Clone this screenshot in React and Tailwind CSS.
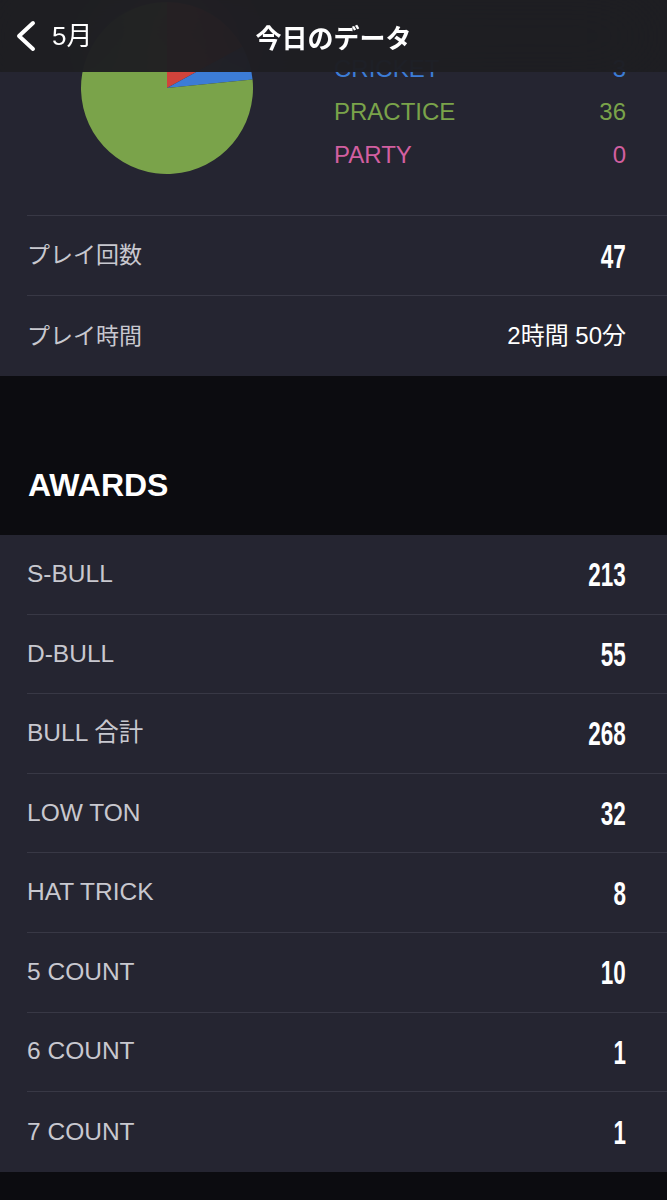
import React from "react";

const font = { fontFamily: '"Liberation Sans", "Noto Sans CJK JP", sans-serif' };

const legend = [
  { label: "01 GAMES", value: 8, color: "#d0433b", hidden: true },
  { label: "CRICKET", value: 3, color: "#3c7cd6" },
  { label: "PRACTICE", value: 36, color: "#7aa34a" },
  { label: "PARTY", value: 0, color: "#d25fa0" },
];

const awards = [
  ["S-BULL", "213"],
  ["D-BULL", "55"],
  ["BULL 合計", "268"],
  ["LOW TON", "32"],
  ["HAT TRICK", "8"],
  ["5 COUNT", "10"],
  ["6 COUNT", "1"],
  ["7 COUNT", "1"],
];

const Pie = () => {
  const total = legend.reduce((s, d) => s + d.value, 0);
  let start = 0;
  const r = 86;
  const c = 86;
  return (
    <svg width="172" height="172" viewBox="0 0 172 172" className="block">
      {legend.map((d) => {
        if (!d.value) return null;
        const a0 = (start / total) * Math.PI * 2;
        start += d.value;
        const a1 = (start / total) * Math.PI * 2;
        const x0 = c + r * Math.sin(a0);
        const y0 = c - r * Math.cos(a0);
        const x1 = c + r * Math.sin(a1);
        const y1 = c - r * Math.cos(a1);
        const large = a1 - a0 > Math.PI ? 1 : 0;
        return (
          <path
            key={d.label}
            d={`M${c},${c} L${x0},${y0} A${r},${r} 0 ${large} 1 ${x1},${y1} Z`}
            fill={d.color}
          />
        );
      })}
    </svg>
  );
};

const Num = ({ children }) => (
  <span className="inline-block origin-right scale-x-[0.66] text-[34px] font-bold leading-none text-white">
    {children}
  </span>
);

const Row = ({ label, children, last, jp }) => (
  <div className="pl-[27px]">
    <div className={`flex h-[80px] items-center justify-between pr-[41px] ${last ? "" : "border-b border-[#383845]"}`}>
      <span className={`${jp ? "text-[23px]" : "text-[24.5px]"} text-[#c8c8cf]`}>{label}</span>
      {children}
    </div>
  </div>
);

export default function App() {
  return (
    <div className="relative min-h-[1200px] bg-[#0c0c10]" style={font}>
      <header className="absolute inset-x-0 top-0 z-10 flex h-[72px] items-center bg-[#1e1d22]/95 backdrop-blur-2xl">
        <div className="flex items-center pl-[14px]">
          <svg width="24" height="32" viewBox="0 0 24 32">
            <polyline points="19,3 5,16 19,29" fill="none" stroke="white" strokeWidth="4" strokeLinecap="round" strokeLinejoin="round" />
          </svg>
          <span className="ml-[14px] text-[26px] text-white">5月</span>
        </div>
        <h1 className="absolute left-1/2 -translate-x-1/2 text-[26px] font-semibold text-white" style={{ fontFamily: '"Noto Sans CJK JP", sans-serif' }}>
          今日のデータ
        </h1>
      </header>

      <section className="bg-[#252531]">
        <div className="flex pt-[2px] pb-[39px]">
          <div className="pl-[81px]">
            <Pie />
          </div>
          <div className="ml-[81px] flex flex-1 flex-col pr-[41px] pt-[2px]">
            {legend.map((d) => (
              <div key={d.label} className="flex h-[43px] items-center justify-between text-[24px]" style={{ color: d.color }}>
                {d.hidden ? null : (
                  <>
                    <span>{d.label}</span>
                    <span>{d.value}</span>
                  </>
                )}
              </div>
            ))}
          </div>
        </div>
        <div className="pl-[27px]">
          <div className="border-t border-[#383845]" />
        </div>
        <Row label="プレイ回数" jp>
          <Num>47</Num>
        </Row>
        <Row label="プレイ時間" jp last>
          <span className="text-[24px] text-white">2時間 50分</span>
        </Row>
      </section>

      <div className="flex h-[159px] items-end px-[28px] pb-[26px]">
        <h2 className="text-[32px] font-bold text-white">AWARDS</h2>
      </div>

      <section className="bg-[#252531]">
        {awards.map(([label, value], i) => (
          <div key={label} className="pl-[27px]">
            <div className={`flex h-[79.6px] items-center justify-between pr-[41px] ${i === awards.length - 1 ? "" : "border-b border-[#383845]"}`}>
              <span className="text-[24.5px] text-[#c8c8cf]">{label}</span>
              <Num>{value}</Num>
            </div>
          </div>
        ))}
      </section>
    </div>
  );
}
